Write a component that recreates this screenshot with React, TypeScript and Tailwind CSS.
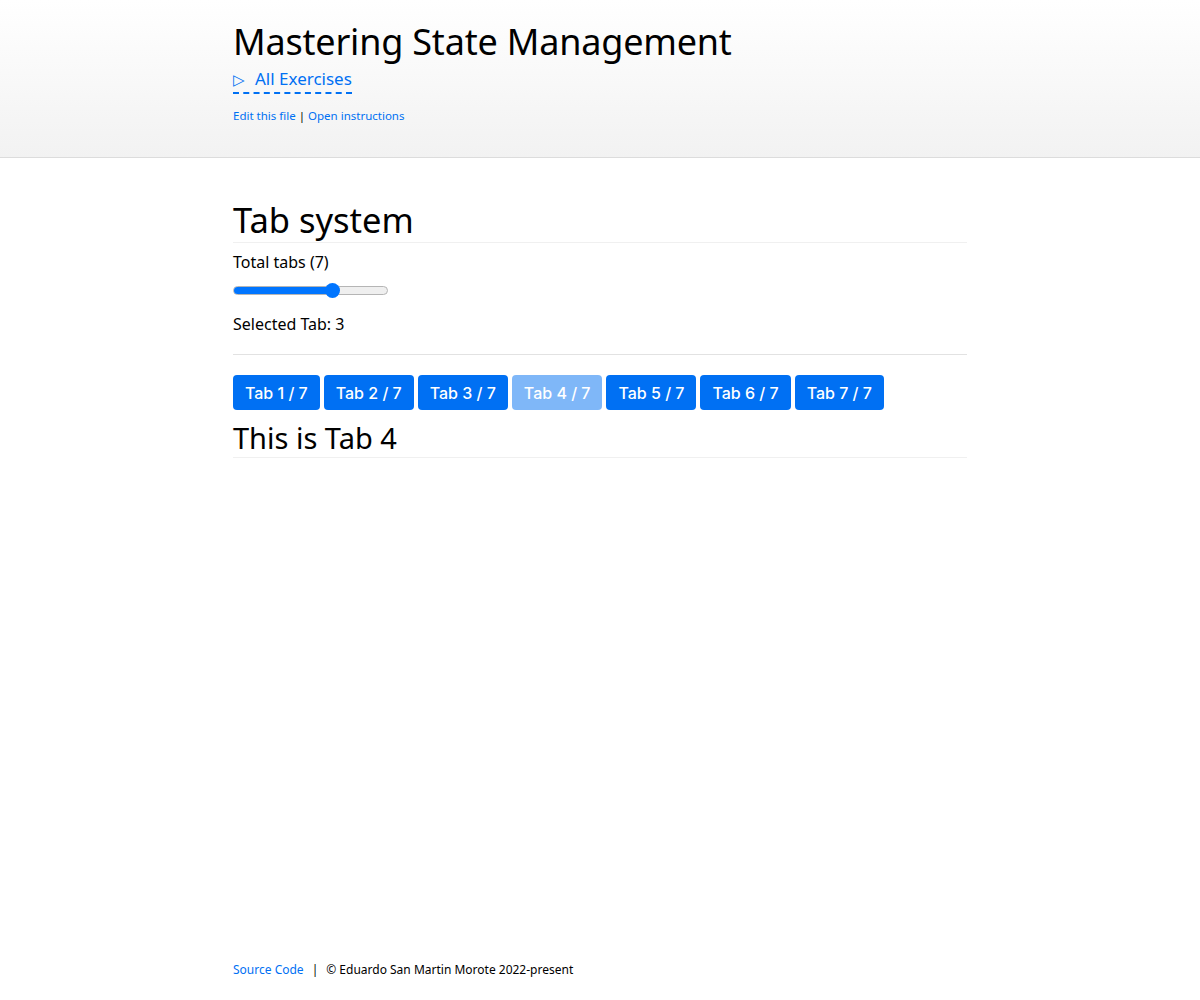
import React from "react";

const tabs = [1, 2, 3, 4, 5, 6, 7];

export default function App() {
  return (
    <div
      className="min-h-[1000px] flex flex-col bg-white text-black"
      style={{ fontFamily: '"Noto Sans", "Open Sans", sans-serif' }}
    >
      <header className="h-[158px] border-b border-[#dcdcdc] bg-gradient-to-b from-white to-[#f2f2f2]">
        <div className="w-[734px] mx-auto pt-[16px]">
          <h1 className="text-[36px] leading-[51px] font-normal tracking-[-0.2px]">Mastering State Management</h1>
          <a className="inline-flex items-center gap-[10px] text-[17px] leading-[24px] text-[#0070f3] border-b-2 border-dashed border-[#0070f3] pb-[1px]">
            <span className="text-[15px]">▷</span>
            <span>All Exercises</span>
          </a>
          <div className="mt-[14px] text-[11.5px] leading-[16px]">
            <a className="text-[#0070f3]">Edit this file</a>
            <span className="mx-[3px]">|</span>
            <a className="text-[#0070f3]">Open instructions</a>
          </div>
        </div>
      </header>
      <main className="w-[734px] mx-auto pt-[41px] flex-1">
        <h2 className="text-[34.5px] leading-[42px] border-b border-[#f0f0f0] pb-[1px]">Tab system</h2>
        <div className="mt-[7px] text-[16px] leading-[24px]">Total tabs (7)</div>
        <div className="mt-[8px] relative w-[155px] h-[16px] flex items-center">
          <div className="w-full h-[9px] rounded-full bg-[#efefef] border border-[#b5b5b5] overflow-hidden">
            <div className="h-full w-[99px] bg-[#0075ff]" />
          </div>
          <div className="absolute left-[92px] top-[1px] w-[15px] h-[15px] rounded-full bg-[#0075ff]" />
        </div>
        <div className="mt-[14px] text-[16px] leading-[24px]">Selected Tab: 3</div>
        <hr className="mt-[18px] border-t border-[#e2e2e2]" />
        <div className="mt-[20px] flex gap-[4px]">
          {tabs.map((t) => (
            <button
              key={t}
              className={`h-[35px] px-[12px] rounded-[4px] text-white text-[16px] font-medium ${t === 4 ? "bg-[#0070f3]/50" : "bg-[#0070f3]"}`}
              style={{ fontFamily: "Inter, sans-serif" }}
            >
              Tab {t} / 7
            </button>
          ))}
        </div>
        <h3 className="mt-[10px] text-[29px] leading-[36px] border-b border-[#f0f0f0] pb-[1px]">This is Tab 4</h3>
      </main>
      <footer className="w-[734px] mx-auto pb-[22px] text-[12px] leading-[16px]">
        <a className="text-[#0070f3]">Source Code</a>
        <span className="mx-[8px]">|</span>
        <span>© Eduardo San Martin Morote 2022-present</span>
      </footer>
    </div>
  );
}
